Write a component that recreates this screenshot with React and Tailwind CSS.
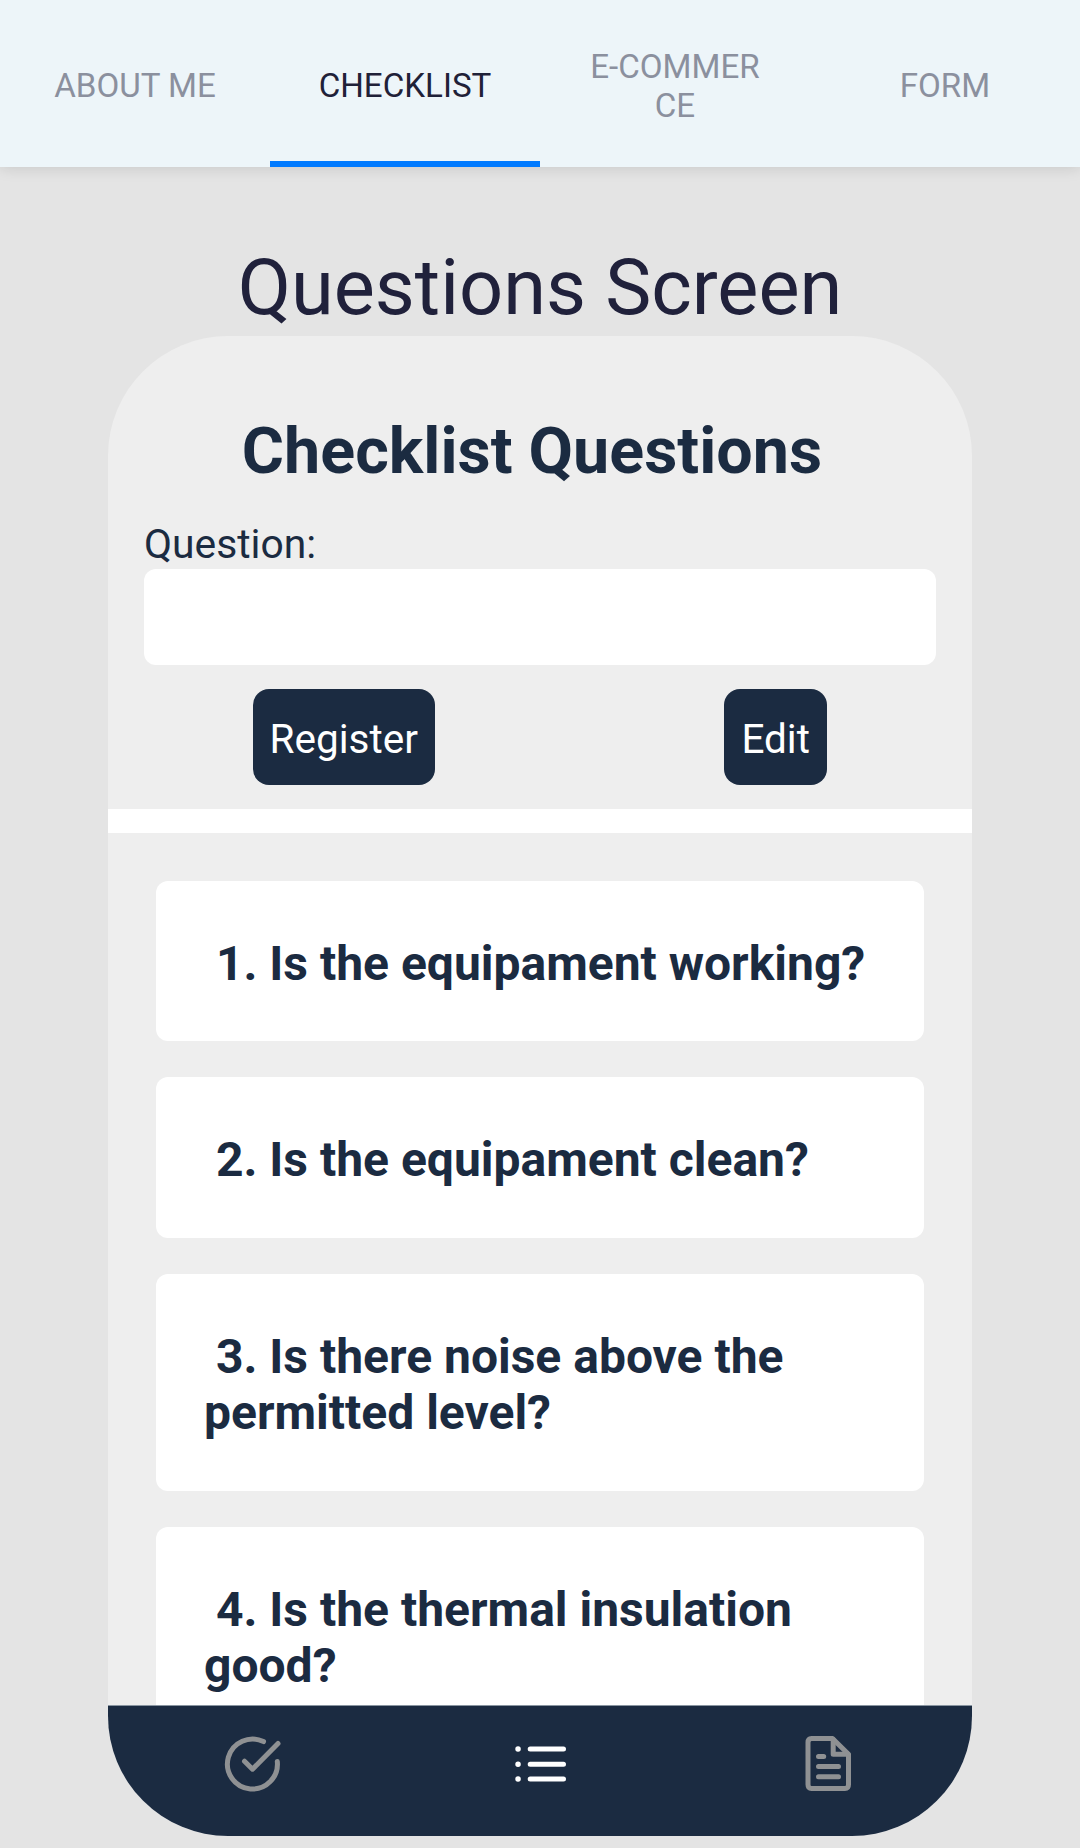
const tabs = ["ABOUT ME", "CHECKLIST", "E-COMMERCE", "FORM"];
const questions = [
  "Is the equipament working?",
  "Is the equipament clean?",
  "Is there noise above the permitted level?",
  "Is the thermal insulation good?",
];

function Icon({ children, className }) {
  return (
    <svg
      viewBox="0 0 60 60"
      className={`h-[60px] w-[60px] ${className}`}
      fill="none"
      stroke="currentColor"
      strokeWidth="5"
      strokeLinecap="round"
      strokeLinejoin="round"
    >
      {children}
    </svg>
  );
}

export default function App() {
  return (
    <div className="flex h-[1848px] w-[1080px] flex-col overflow-hidden bg-[#e4e4e4] font-['Roboto',sans-serif]">
      <nav className="grid h-[167px] shrink-0 grid-cols-4 bg-[#edf5f9] shadow-[0_1px_14px_rgba(0,0,0,0.13)]">
        {tabs.map((tab) => (
          <div
            key={tab}
            className={`flex items-center justify-center border-b-6 px-[48px] pt-[10px] text-center text-[33.15px] leading-[39px] ${
              tab === "CHECKLIST"
                ? "border-[#007aff] text-[#1f2138]"
                : "border-transparent text-[#8b909e]"
            }`}
          >
            <span className="min-w-0 break-all">{tab}</span>
          </div>
        ))}
      </nav>

      <h1 className="mt-[75px] h-[94px] shrink-0 text-center text-[77.5px] leading-[91px] text-[#20213b]">
        Questions Screen
      </h1>

      <main className="mx-[108px] flex h-[1500px] shrink-0 flex-col overflow-hidden rounded-[120px] bg-[#eeeeee] text-[#1b2b41]">
        <section className="shrink-0 pt-[78px]">
          <h2 className="h-[106px] pr-4 text-center text-[64.6px] leading-[75px] font-bold">
            Checklist Questions
          </h2>
          <div className="mx-9 h-[49px] text-[40.8px] leading-[48px]">Question:</div>
          <div className="mx-9 h-24 rounded-xl bg-white" />
          <div className="flex justify-around py-6 text-[40.5px] text-white">
            <button className="h-24 rounded-[16px] bg-[#1b2b41] px-[17px] pt-1">Register</button>
            <button className="h-24 rounded-[16px] bg-[#1b2b41] px-[17.5px] pt-1">Edit</button>
          </div>
        </section>

        <div className="h-6 shrink-0 bg-white" />

        <ol className="flex min-h-0 flex-1 flex-col gap-9 overflow-hidden px-12 pt-12">
          {questions.map((q, i) => (
            <li
              key={q}
              className="shrink-0 rounded-xl bg-white px-12 pt-[54.9px] pb-[48.9px] text-[48px] leading-[56.6px] font-bold"
            >
              {`\u00a0${i + 1}. ${q}`}
            </li>
          ))}
        </ol>

        <footer className="grid h-[131px] shrink-0 grid-cols-3 justify-items-center border-t border-[#8995a0] bg-[#1b2b41] pt-[28px]">
          <Icon className="text-[#8f9193]">
            <path d="M41.5 7.6A25 25 0 1 0 55.3 27.5" />
            <path d="M22.5 27.2L30.5 35.2L56 9.5" />
          </Icon>
          <Icon className="text-white">
            <path d="M8 15h.1M8 30.3h.1M8 45h.1" strokeWidth="5.4" />
            <path d="M20.2 15h33.3M20.2 30.3h33.3M20.2 45h33.3" />
          </Icon>
          <Icon className="text-[#8f9193]">
            <path d="M34.5 4.5H13.5Q10 4.5 10 8.5V50.5Q10 54.5 13.5 54.5H47Q50.5 54.5 50.5 50.5V20.2Z" />
            <path d="M35.2 5.5V20.2H50" />
            <path d="M20.5 22.4h5.2M20.5 32.4h20M20.5 42.7h20" />
          </Icon>
        </footer>
      </main>
    </div>
  );
}
